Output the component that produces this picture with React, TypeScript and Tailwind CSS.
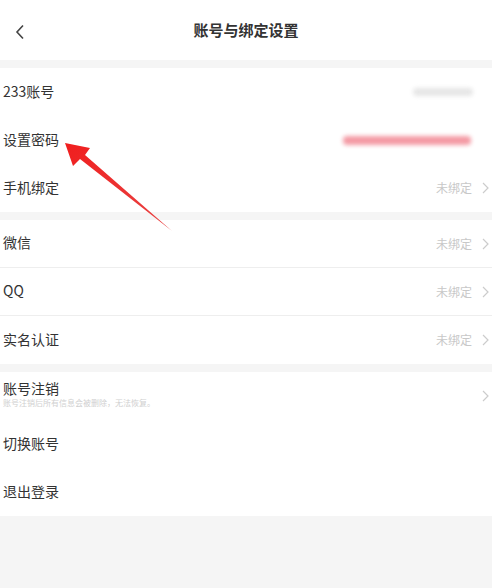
import React from "react";

const font = { fontFamily: '"Noto Sans CJK SC", "Noto Sans", sans-serif' };

function Chevron() {
  return (
    <svg width="7" height="12" viewBox="0 0 7 12" className="ml-[10px]">
      <path d="M1 1 L6 6 L1 11" fill="none" stroke="#cccccc" strokeWidth="1.2" />
    </svg>
  );
}

function Row({ label, right, divider }: { label: string; right?: React.ReactNode; divider?: boolean }) {
  return (
    <div className={`flex h-[48px] items-center justify-between pl-[3px] pr-[3px] ${divider ? "border-b border-[#eeeeee]" : ""}`}>
      <span className="-mt-[2px] text-[14px] text-[#333333]">{label}</span>
      <div className="flex items-center">{right}</div>
    </div>
  );
}

const unbound = (
  <>
    <span className="text-[12px] text-[#c8c8c8]">未绑定</span>
    <Chevron />
  </>
);

export default function App() {
  return (
    <div className="relative min-h-[588px] w-[492px] overflow-hidden bg-[#f5f5f5]" style={font}>
      <div className="relative flex h-[60px] items-center justify-center bg-white">
        <svg width="10" height="16" viewBox="0 0 10 16" className="absolute left-[15px] top-[24px]">
          <path d="M8 1.5 L2 8 L8 14.5" fill="none" stroke="#444" strokeWidth="1.6" />
        </svg>
        <span className="text-[15px] font-bold text-[#333333]">账号与绑定设置</span>
      </div>

      <div className="mt-[8px] bg-white">
        <Row
          label="233账号"
          right={<div className="mr-[16px] h-[8px] w-[60px] rounded-full bg-[#e6e6e6] blur-[2px]" />}
        />
        <Row
          label="设置密码"
          right={<div className="mr-[18px] h-[9px] w-[128px] rounded-sm bg-[#f49aa4] blur-[2px]" />}
        />
        <Row label="手机绑定" right={unbound} />
      </div>

      <div className="mt-[8px] bg-white">
        <Row label="微信" right={unbound} divider />
        <Row label="QQ" right={unbound} divider />
        <Row label="实名认证" right={unbound} />
      </div>

      <div className="mt-[8px] bg-white">
        <div className="flex h-[48px] items-center justify-between pl-[3px] pr-[3px]">
          <div className="-mt-[4px] flex flex-col">
            <span className="text-[14px] leading-[18px] text-[#333333]">账号注销</span>
            <span className="text-[8px] leading-[12px] text-[#d0d0d0]">账号注销后所有信息会被删除，无法恢复。</span>
          </div>
          <Chevron />
        </div>
        <Row label="切换账号" />
        <Row label="退出登录" />
      </div>

      <svg width="492" height="588" className="pointer-events-none absolute left-0 top-0">
        <defs>
          <linearGradient id="ag" x1="0" y1="0" x2="1" y2="1">
            <stop offset="0" stopColor="#f01e1e" />
            <stop offset="1" stopColor="#e84545" />
          </linearGradient>
        </defs>
        <polygon points="65,143 90,148 85,155 172,231 80,159 73,166" fill="url(#ag)" />
      </svg>
    </div>
  );
}
